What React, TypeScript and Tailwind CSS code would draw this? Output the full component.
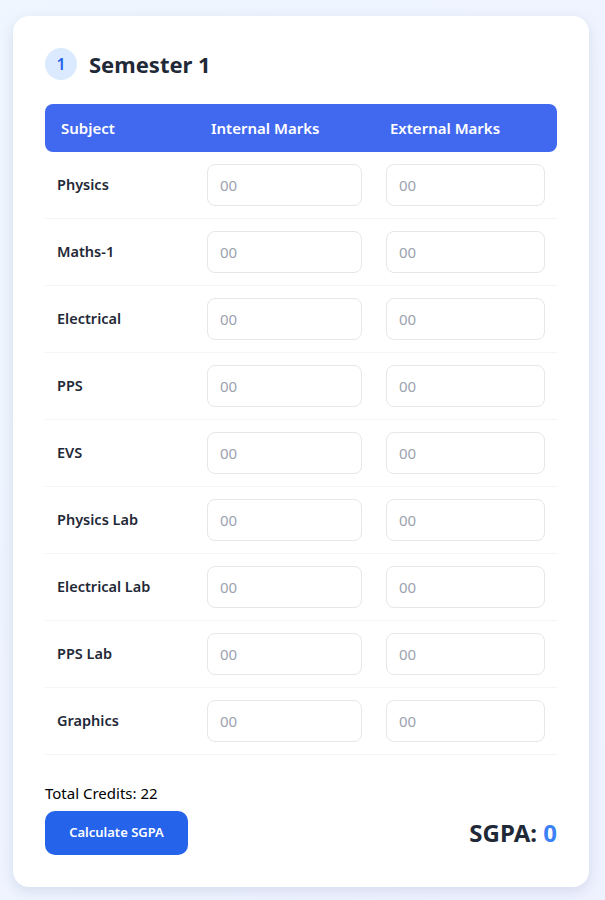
import React from 'react';

const subjects = [
  'Physics',
  'Maths-1',
  'Electrical',
  'PPS',
  'EVS',
  'Physics Lab',
  'Electrical Lab',
  'PPS Lab',
  'Graphics',
];

export default function App() {
  return (
    <div
      className="min-h-screen bg-gradient-to-br from-[#eff6ff] to-[#eef2ff] pl-[13px] pr-[16px] pt-[16px] pb-[14px]"
      style={{ fontFamily: '"Noto Sans", "Open Sans", sans-serif' }}
    >
      <div className="rounded-2xl bg-white p-8 shadow-[0_4px_14px_rgba(30,50,100,0.12)]">
        <div className="mb-6 flex items-center gap-3">
          <div className="flex h-8 w-8 items-center justify-center rounded-full bg-[#dbeafe] text-[16px] font-semibold text-[#2563eb]">
            1
          </div>
          <h2 className="text-[22px] font-bold leading-8 text-[#1f2937]">Semester 1</h2>
        </div>

        <table className="w-full border-collapse text-left">
          <colgroup>
            <col className="w-[150px]" />
            <col className="w-[179px]" />
            <col />
          </colgroup>
          <thead>
            <tr className="bg-[#4169f0] text-white">
              <th className="h-12 rounded-l-lg px-4 text-[15px] font-semibold">Subject</th>
              <th className="h-12 px-4 text-[15px] font-semibold">Internal Marks</th>
              <th className="h-12 rounded-r-lg px-4 text-[15px] font-semibold">External Marks</th>
            </tr>
          </thead>
          <tbody>
            {subjects.map((s) => (
              <tr key={s} className="border-b border-[#f3f4f6]">
                <td className="px-3 py-3 text-[14.5px] font-semibold text-[#1f2937]">{s}</td>
                <td className="px-3 py-3">
                  <input
                    placeholder="00"
                    className="h-[42px] w-full rounded-lg border border-[#e5e7eb] px-3 text-[15px] text-gray-700 outline-none placeholder:text-[#9ca3af]"
                  />
                </td>
                <td className="px-3 py-3">
                  <input
                    placeholder="00"
                    className="h-[42px] w-full rounded-lg border border-[#e5e7eb] px-3 text-[15px] text-gray-700 outline-none placeholder:text-[#9ca3af]"
                  />
                </td>
              </tr>
            ))}
          </tbody>
        </table>

        <div className="mt-7 text-[15px] leading-5 text-black">Total Credits: 22</div>
        <div className="mt-2 flex items-center justify-between">
          <button className="h-11 w-[143px] rounded-[10px] bg-[#2563eb] text-[13px] font-semibold text-white">
            Calculate SGPA
          </button>
          <div className="text-[24px] font-bold text-[#1f2937]">
            SGPA: <span className="text-[#3b82f6]">0</span>
          </div>
        </div>
      </div>
    </div>
  );
}
